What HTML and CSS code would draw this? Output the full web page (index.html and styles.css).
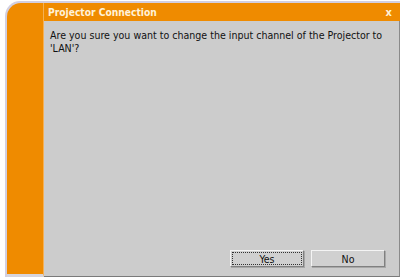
FILE: index.html
```html
<!DOCTYPE html>
<html>
<head>
<meta charset="utf-8">
<link rel="stylesheet" href="styles.css">
</head>
<body>
<div class="window">
  <div class="side"></div>
  <div class="titlebar">
    <span class="title">Projector Connection</span>
    <span class="close">x</span>
  </div>
  <div class="panel">
    <p class="message">Are you sure you want to change the input channel of the Projector to 'LAN'?</p>
    <div class="buttons">
      <button class="btn focused">Yes</button>
      <button class="btn">No</button>
    </div>
  </div>
</div>
</body>
</html>
```
FILE: styles.css
```css
html, body {
  margin: 0;
  padding: 0;
  background: #ffffff;
}
body {
  width: 403px;
  height: 279px;
  overflow: hidden;
  font-family: "DejaVu Sans Condensed", "DejaVu Sans", sans-serif;
  font-stretch: condensed;
}
.window {
  margin: 3px 3px 0 7px;
  width: 393px;
  height: 274px;
  display: grid;
  grid-template-columns: 37px 1fr;
  grid-template-rows: 18px 1fr;
  background: #ef8b00;
  border-top-left-radius: 14px;
  box-shadow: -1px -1px 0 1px #d2cfe0;
  box-sizing: border-box;
}
.side {
  grid-column: 1;
  grid-row: 1 / 3;
  border-right: 1px solid #f4b055;
  border-bottom: 3px solid #d6d4dc;
}
.titlebar {
  grid-column: 2;
  grid-row: 1;
  display: flex;
  align-items: center;
  justify-content: space-between;
  padding: 0 8px 0 4px;
}
.title {
  color: #fff2d8;
  font-weight: bold;
  font-size: 10.2px;
}
.close {
  color: #fff2d8;
  font-weight: bold;
  font-size: 11px;
  line-height: 1;
}
.panel {
  grid-column: 2;
  grid-row: 2;
  background: #cccccc;
  border-right: 1px solid #8a8a8a;
  border-bottom: 1px solid #7a7a7a;
  display: flex;
  flex-direction: column;
  padding: 8px 10px 8px 6px;
}
.message {
  margin: 0;
  font-size: 10.55px;
  line-height: 13px;
  color: #111111;
}
.buttons {
  margin-top: auto;
  display: flex;
  justify-content: flex-end;
  gap: 7px;
  padding-right: 4px;
  padding-bottom: 1px;
}
.btn {
  width: 74px;
  height: 17px;
  padding: 0;
  font-family: "DejaVu Sans Condensed", "DejaVu Sans", sans-serif;
  font-stretch: condensed;
  font-size: 10.5px;
  color: #111111;
  background: #d0d0d0;
  border: 1px solid;
  border-color: #f4f4f4 #808080 #808080 #f4f4f4;
  box-shadow: 1px 1px 0 #a8a8a8;
}
.btn.focused {
  outline: 1px dotted #333333;
  outline-offset: -3px;
}
```
